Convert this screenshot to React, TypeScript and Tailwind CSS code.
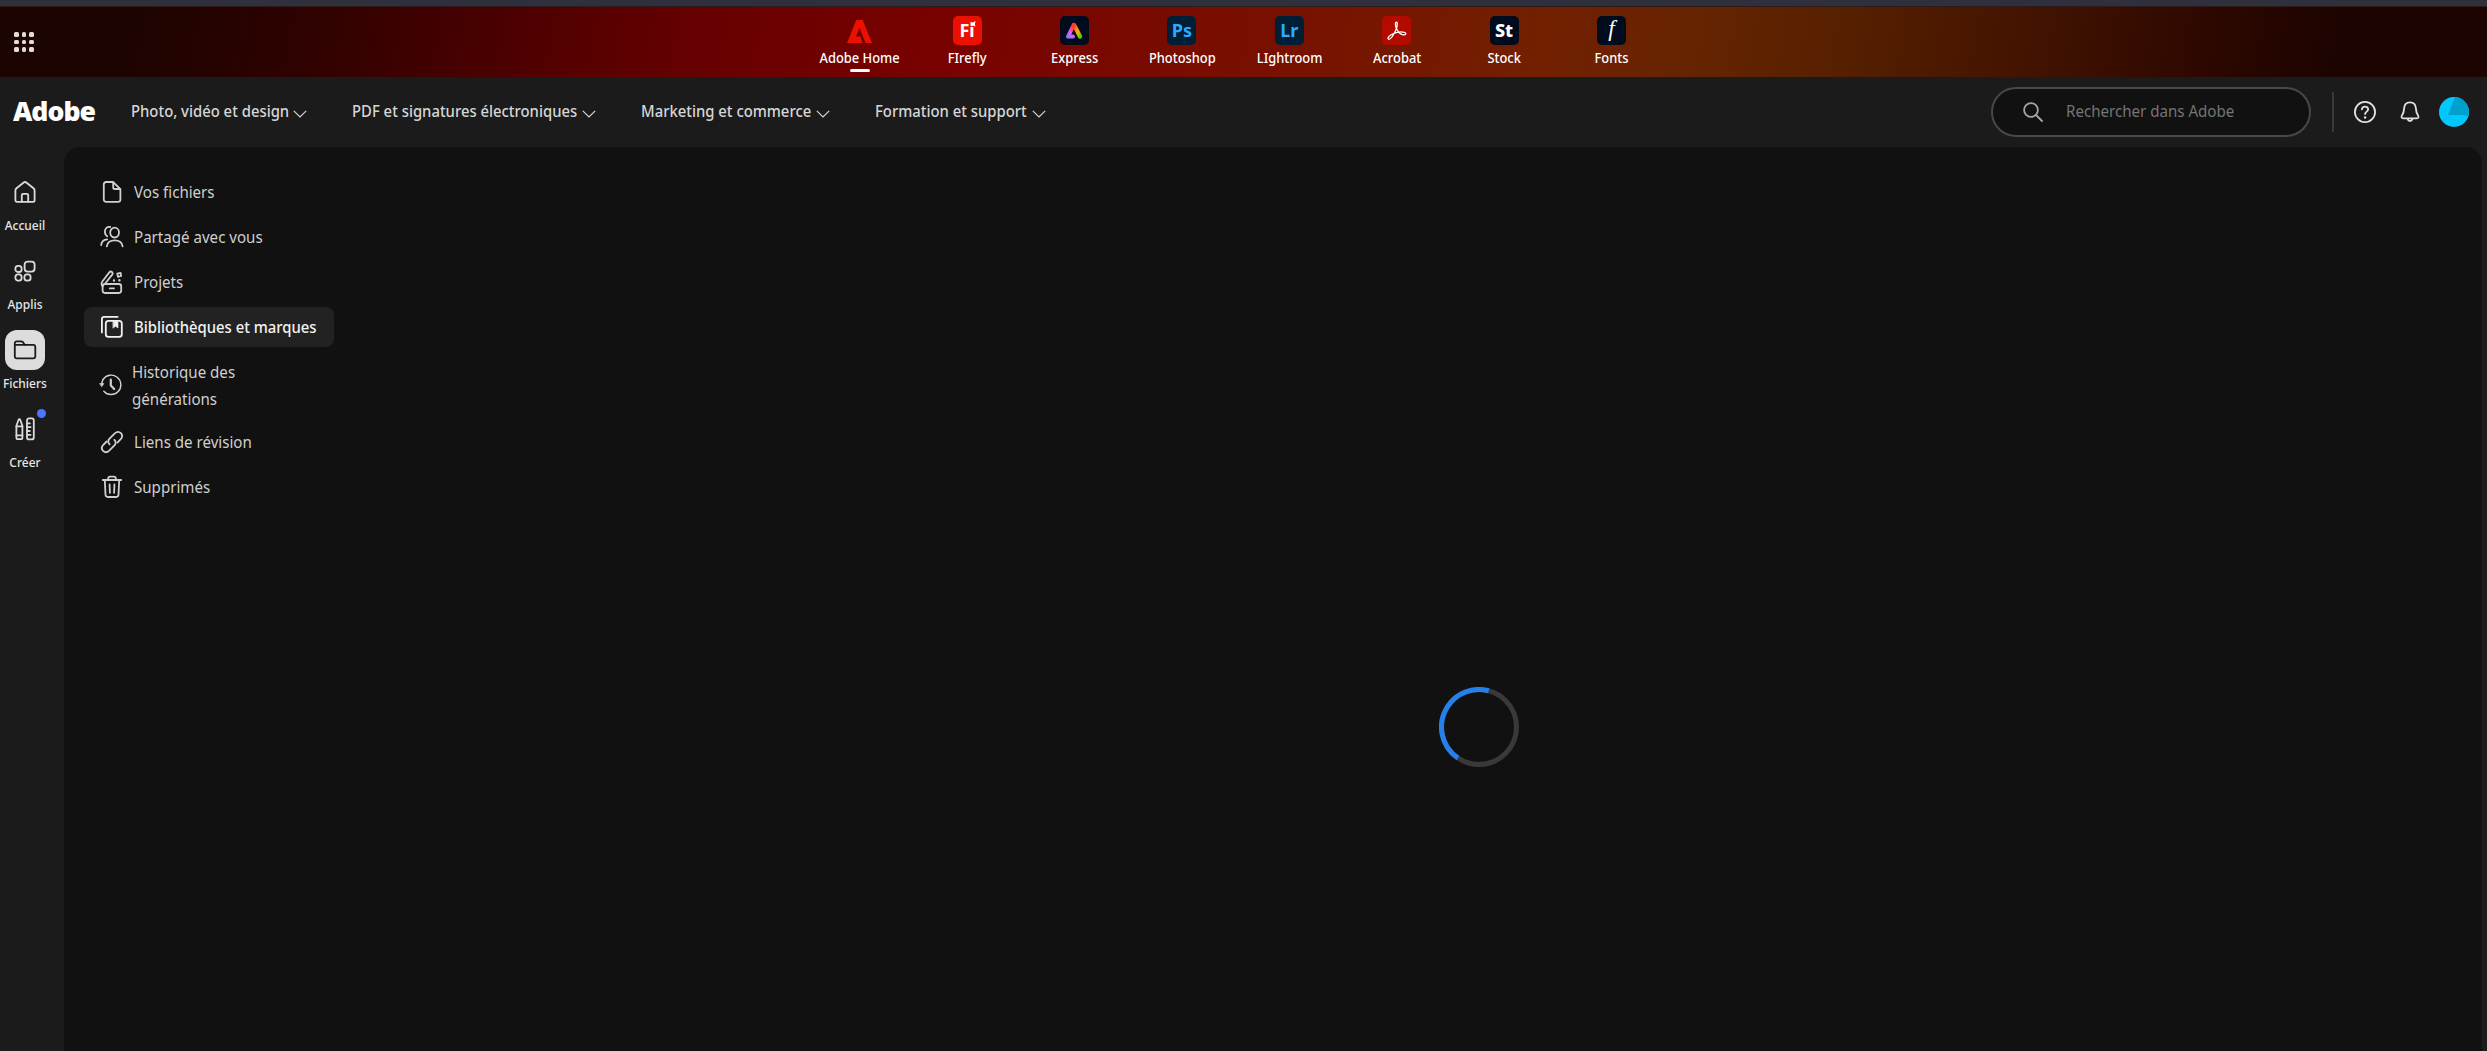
import React from 'react';

interface AppLink {
  name: string;
  icon: React.ReactNode;
  active?: boolean;
}

interface MenuItem {
  label: string;
  icon: React.ReactNode;
  active?: boolean;
}

interface TileProps {
  className: string;
  children: React.ReactNode;
}

const Tile = ({ className, children }: TileProps) => (
  <span className={`flex h-[29px] w-[29px] items-center justify-center rounded-[5px] ${className}`}>{children}</span>
);

const AcrobatMark = () => (
  <svg viewBox="0 0 20 20" className="h-5 w-5" fill="none" stroke="#fff" strokeWidth="1.3" strokeLinejoin="round">
    <path d="M9.3 1.2C7.9 1.4 8.2 4.6 9.4 7.4C10.8 10.4 14 13.6 16.6 13.9C19.2 14.1 19.6 11.9 17.2 11.3C13.6 10.5 7.6 11.8 4 13.8C1 15.5 0.4 17.6 1.6 18.2C3.8 19 8 11.8 9.5 7.2C10.5 4 10.7 1.1 9.3 1.2Z" />
  </svg>
);

const ExpressMark = () => (
  <svg viewBox="0 0 18 18" className="h-[18px] w-[18px]" fill="none" strokeLinecap="round" strokeLinejoin="round">
    <defs>
      <linearGradient id="exLeft" x1="0" y1="1" x2="0.6" y2="0">
        <stop offset="0" stopColor="#8a7bff" />
        <stop offset="0.5" stopColor="#e05cf0" />
        <stop offset="1" stopColor="#ff3b30" />
      </linearGradient>
      <linearGradient id="exRight" x1="0" y1="0" x2="1" y2="1">
        <stop offset="0" stopColor="#ff3b20" />
        <stop offset="0.6" stopColor="#ffb000" />
        <stop offset="1" stopColor="#5ad000" />
      </linearGradient>
    </defs>
    <path d="M9 3L15 14.5" stroke="url(#exRight)" strokeWidth="4.4" />
    <path d="M8.6 3.2L3 14.6H8" stroke="url(#exLeft)" strokeWidth="4" />
    <path d="M8.8 9L10.8 13.6" stroke="#000b1d" strokeWidth="1.6" />
  </svg>
);

const apps: AppLink[] = [
  {
    name: 'Adobe Home',
    active: true,
    icon: (
      <svg viewBox="0 0 25 23" className="mt-0.5 h-[23px] w-[25px]" fill="#eb1000">
        <path d="M9.3 0H15.7L25 23H18.6L12.6 7.8L9 16.6H13.4L15.4 23H0Z" />
      </svg>
    ),
  },
  {
    name: 'FIrefly',
    icon: (
      <Tile className="relative bg-[#eb1000] text-[18px] font-bold text-white">
        Fi
        <svg viewBox="0 0 6 6" className="absolute left-[17px] top-[5px] h-[6px] w-[6px]" fill="#fff">
          <path d="M0 1L3 1.4L5.6 0L4.8 3L5.4 5.6L3 4.6L0.6 5.4L1.4 3Z" />
        </svg>
      </Tile>
    ),
  },
  { name: 'Express', icon: <Tile className="bg-[#000b1d]"><ExpressMark /></Tile> },
  { name: 'Photoshop', icon: <Tile className="bg-[#001e36] text-[18px] font-bold text-[#31a8ff]">Ps</Tile> },
  { name: 'LIghtroom', icon: <Tile className="bg-[#001e36] text-[18px] font-bold text-[#31a8ff]">Lr</Tile> },
  { name: 'Acrobat', icon: <Tile className="bg-[#b30b00]"><AcrobatMark /></Tile> },
  { name: 'Stock', icon: <Tile className="bg-[#000b1d] text-[18px] font-extrabold text-white">St</Tile> },
  {
    name: 'Fonts',
    icon: <Tile className="bg-[#000b1d] pb-0.5 font-['Liberation_Serif',serif] text-[23px] italic text-white">f</Tile>,
  },
];

const navLinks = [
  { label: 'Photo, vidéo et design', box: 'w-[221px]', text: 'w-[162px]' },
  { label: 'PDF et signatures électroniques', box: 'w-[289px]', text: 'w-[230px]' },
  { label: 'Marketing et commerce', box: 'w-[234px]', text: 'w-[175px]' },
  { label: 'Formation et support', box: 'w-[172px]', text: 'w-[157px]' },
];

interface GlyphProps {
  className?: string;
  children: React.ReactNode;
}

// 24px outline icon, one unit per pixel
const Glyph = ({ className = '', children }: GlyphProps) => (
  <svg viewBox="0 0 24 24" className={`h-6 w-6 shrink-0 ${className}`} fill="none" stroke="currentColor" strokeWidth="1.8" strokeLinecap="round" strokeLinejoin="round">
    {children}
  </svg>
);

const railItems: MenuItem[] = [
  {
    label: 'Accueil',
    icon: (
      <Glyph>
        <path d="M2.4 10.4C2.4 9.4 2.8 8.8 3.5 8.2L10.7 2.5C11.5 1.9 12.5 1.9 13.3 2.5L20.5 8.2C21.2 8.8 21.6 9.4 21.6 10.4V20.2C21.6 21.2 21 21.8 20 21.8H4C3 21.8 2.4 21.2 2.4 20.2Z" />
        <path d="M8.8 21.6V15.2C8.8 14.3 9.3 13.8 10.2 13.8H13.8C14.7 13.8 15.2 14.3 15.2 15.2V21.6" />
      </Glyph>
    ),
  },
  {
    label: 'Applis',
    icon: (
      <Glyph>
        <rect x="11.6" y="2.6" width="10" height="10" rx="3" />
        <rect x="2.4" y="6.8" width="6.2" height="6.2" rx="2.6" />
        <rect x="2.4" y="15.4" width="6.2" height="6.2" rx="2.6" />
        <rect x="11.4" y="15.4" width="6.2" height="6.2" rx="2.6" />
      </Glyph>
    ),
  },
  {
    label: 'Fichiers',
    active: true,
    icon: (
      <Glyph className="text-[#1b1b1b]">
        <path d="M1.8 18.2V5.4C1.8 4.1 2.6 3.3 3.9 3.3H8C8.8 3.3 9.4 3.6 9.9 4.2L11.8 6.8H20.2C21.5 6.8 22.3 7.6 22.3 8.9V18.2C22.3 19.5 21.5 20.3 20.2 20.3H3.9C2.6 20.3 1.8 19.5 1.8 18.2Z" />
        <path d="M2 6.8H11.8" />
      </Glyph>
    ),
  },
  {
    label: 'Créer',
    icon: (
      <Glyph>
        <path d="M3.4 8.8L5.6 2.8C5.9 2 6.9 2 7.2 2.8L9.4 8.8V20.4C9.4 21.6 8.8 22.2 7.8 22.2H5C4 22.2 3.4 21.6 3.4 20.4Z" />
        <path d="M3.4 9.4H9.4M3.4 18.4H9.4" />
        <rect x="14" y="1.4" width="6.8" height="21" rx="2" />
        <path d="M14.2 6.4H16.8M14.2 10.2H17.6M14.2 14H16.8M14.2 17.8H17.6" />
      </Glyph>
    ),
  },
];

const menuItems: MenuItem[] = [
  {
    label: 'Vos fichiers',
    icon: (
      <Glyph>
        <path d="M3.8 19.4V4.4C3.8 3 4.7 2 6.2 2H13L20.4 9.2V19.4C20.4 20.9 19.5 21.8 18 21.8H6.2C4.7 21.8 3.8 20.9 3.8 19.4Z" />
        <path d="M13.2 2.4V7.4C13.2 8.5 13.8 9 14.8 9H20" />
      </Glyph>
    ),
  },
  {
    label: 'Partagé avec vous',
    icon: (
      <Glyph>
        <ellipse cx="14.6" cy="7.6" rx="4.4" ry="4.9" />
        <path d="M6.8 21.4C7.3 17.6 10.4 15.4 14.7 15.4C19 15.4 22.1 17.6 22.6 21.4" />
        <path d="M10.2 2C7.2 1.4 4.9 3.4 4.9 6.6C4.9 8.8 5.8 10.4 7.2 11.2M1.2 20C1.4 16.6 3.6 14.6 7.2 14.3" />
      </Glyph>
    ),
  },
  {
    label: 'Projets',
    icon: (
      <Glyph>
        <rect x="2.6" y="14" width="18.6" height="9" rx="2.4" />
        <path d="M9.8 18.4H14" />
        <path d="M2.7 16.4C1.2 14.6 1.2 12.9 2.5 11.2L9.3 2.4C10 1.5 11.1 1.4 11.9 2C12.8 2.7 12.9 3.7 12.2 4.6L5 13.8" />
        <path d="M17.2 3.6L20.6 2.8L21.2 6L18 6.8Z" />
        <path d="M14 10.5V10.6M19.4 10.3V10.4" strokeWidth="2.4" />
      </Glyph>
    ),
  },
  {
    label: 'Bibliothèques et marques',
    active: true,
    icon: (
      <Glyph>
        <path d="M1.9 17.4V4.2C1.9 2.8 2.8 1.9 4.2 1.9H17.6" />
        <rect x="5.8" y="5.8" width="16" height="16" rx="2.6" />
        <path d="M13.2 6.2H18V13L15.6 11.2L13.2 13Z" fill="currentColor" strokeWidth="0.6" />
      </Glyph>
    ),
  },
  {
    label: 'Historique des générations',
    icon: (
      <Glyph>
        <path d="M4 6.6A9.7 9.7 0 1 1 4.8 18.2" strokeWidth="1.4" />
        <path d="M11.8 6.6V12.4L15.2 16" strokeWidth="2.2" />
        <path d="M1 10.6H4.8L2.9 13.4Z" fill="currentColor" strokeWidth="0.8" />
        <path d="M2.8 11C2.9 9.4 3.3 8 4 6.6" strokeWidth="1.4" />
      </Glyph>
    ),
  },
  {
    label: 'Liens de révision',
    icon: (
      <Glyph>
        <path d="M9.6 14.4C7.9 12.6 8 10.2 9.8 8.4L14.8 3.4C16.7 1.6 19.2 1.6 20.9 3.2C22.6 4.9 22.5 7.4 20.7 9.2L17.4 12.6" />
        <path d="M14.4 9.8C16.1 11.5 16 13.9 14.2 15.7L9.2 20.7C7.3 22.5 4.8 22.5 3.1 20.9C1.4 19.2 1.5 16.7 3.3 14.9L6.6 11.5" />
      </Glyph>
    ),
  },
  {
    label: 'Supprimés',
    icon: (
      <Glyph>
        <path d="M2.8 5H21.2M8.2 4.8V3.6C8.2 2.4 8.9 1.7 10.1 1.7H13.9C15.1 1.7 15.8 2.4 15.8 3.6V4.8" />
        <path d="M4.8 5.2L5.5 19.8C5.6 21.2 6.4 22 7.8 22H16.2C17.6 22 18.4 21.2 18.5 19.8L19.2 5.2" />
        <path d="M9.6 9.4L9.9 17.8M14.4 9.4L14.1 17.8" />
      </Glyph>
    ),
  },
];

const dots = [0, 1, 2, 3, 4, 5, 6, 7, 8];

const AppBar = () => (
  <header className="flex h-[70px] bg-[linear-gradient(100deg,#1c0400_0%,#1c0400_5%,#300200_13%,#4e0000_21%,#660000_28%,#780200_38%,#781000_51%,#722000_62%,#662400_68%,#562000_74%,#441400_81%,#2c0700_89%,#1c0400_94%)]">
    <div className="w-[806px] shrink-0 pl-[14px] pt-[25px]">
      <div className="grid w-5 grid-cols-3 gap-[3px]">
        {dots.map((dot) => (
          <span key={dot} className="h-[4.6px] w-[4.6px] rounded-[1.5px] bg-[#e6dad8]" />
        ))}
      </div>
    </div>
    {apps.map((app) => (
      <a key={app.name} className="flex w-[107.4px] flex-col items-center pt-[9px]">
        <span className="flex h-[29px] items-center">{app.icon}</span>
        <span className="mt-[3px] scale-x-[0.92] whitespace-nowrap text-[14px] font-medium leading-5 text-white">{app.name}</span>
        {app.active && <span className="mt-px h-[3px] w-5 rounded-full bg-white" />}
      </a>
    ))}
  </header>
);

const NavBar = () => (
  <nav className="flex h-[70px] items-center text-[#d6d6d6]">
    <a className="w-[131px] shrink-0 pb-0.5 pl-[13px] text-white">
      <span className="inline-block origin-left scale-x-[0.985] font-['Open_Sans',sans-serif] text-[27px] font-extrabold leading-8 tracking-[-1px]">Adobe</span>
    </a>
    {navLinks.map((link) => (
      <button key={link.label} className={`flex shrink-0 items-center pb-0.5 ${link.box}`}>
        <span className={`text-left ${link.text}`}>
          <span className="inline-block origin-left scale-x-[0.9] whitespace-nowrap text-[16.5px] font-medium leading-6">{link.label}</span>
        </span>
        <svg viewBox="0 0 14 8" className="mt-1.5 h-2 w-3.5" fill="none" stroke="currentColor" strokeWidth="1.2">
          <path d="M0.8 0.8L7 7L13.2 0.8" />
        </svg>
      </button>
    ))}
    <div className="ml-auto flex items-center pb-px">
      <div className="flex h-[50px] w-80 items-center rounded-full border-2 border-[#484848] bg-[#111] pl-[30px]">
        <svg viewBox="0 0 20 20" className="h-5 w-5" fill="none" stroke="#a5a5a5" strokeWidth="1.8" strokeLinecap="round">
          <circle cx="8" cy="8" r="6.9" />
          <path d="M13 13L19 19" />
        </svg>
        <span className="ml-[23px] inline-block origin-left scale-x-[0.915] whitespace-nowrap text-[16.5px] text-[#757575]">Rechercher dans Adobe</span>
      </div>
      <span className="ml-[21px] h-10 w-0.5 bg-[#393939]" />
      <svg viewBox="0 0 24 24" className="ml-[19px] h-6 w-6 text-[#e1e1e1]" fill="none" stroke="currentColor" strokeWidth="1.8" strokeLinecap="round">
        <circle cx="12" cy="12" r="10.1" />
        <path d="M8.9 9.4C9.1 7.6 10.3 6.7 12 6.7C13.8 6.7 15.1 7.7 15.1 9.4C15.1 11.6 12.2 11.6 12.1 14" />
        <path d="M12.1 17.4V17.5" strokeWidth="2.4" />
      </svg>
      <svg viewBox="0 0 24 24" className="ml-[21px] h-6 w-6 text-[#e1e1e1]" fill="none" stroke="currentColor" strokeWidth="1.8" strokeLinecap="round" strokeLinejoin="round">
        <path d="M12 2.4C8.3 2.4 6.3 5 6.1 8.4C5.9 12.2 5.3 13.6 3.9 15.6C3.1 16.9 3.5 18.4 5.2 18.4H18.8C20.5 18.4 20.9 16.9 20.1 15.6C18.7 13.6 18.1 12.2 17.9 8.4C17.7 5 15.7 2.4 12 2.4Z" />
        <path d="M9.7 18.8C10 20.4 10.8 20.9 12 20.9C13.2 20.9 14 20.4 14.3 18.8" />
      </svg>
      <svg viewBox="0 0 30 30" className="ml-[17px] mr-[18px] h-[30px] w-[30px]">
        <clipPath id="avatarClip"><circle cx="15" cy="15" r="15" /></clipPath>
        <g clipPath="url(#avatarClip)">
          <rect width="30" height="30" fill="#00c8ff" />
          <path d="M16 0H30V20L26 18H9Z" fill="#00a0cc" />
        </g>
      </svg>
    </div>
  </nav>
);

const Rail = () => (
  <aside className="flex w-16 shrink-0 flex-col gap-[11px] pt-[25px]">
    {railItems.map((item) => (
      <a key={item.label} className="relative flex h-[68px] w-[49px] flex-col items-center">
        <span className={`flex h-10 w-10 items-center justify-center rounded-xl ${item.active ? 'bg-[#dcdcdc]' : 'text-[#dbdbdb]'}`}>{item.icon}</span>
        <span className="mt-[3px] inline-block scale-x-[0.92] whitespace-nowrap text-[13px] font-medium leading-5 text-[#e6e6e6]">{item.label}</span>
        {item.label === 'Créer' && <span className="absolute left-[37px] top-0 h-[9px] w-[9px] rounded-full bg-[#4b75ff]" />}
      </a>
    ))}
  </aside>
);

const SideMenu = () => (
  <ul className="ml-5 mt-[25px] flex w-[250px] shrink-0 flex-col gap-[5px] text-[#cfcfcf]">
    {menuItems.map((item) => {
      const long = item.label.startsWith('Historique');
      return (
        <li
          key={item.label}
          className={`flex items-center ${long ? 'h-[65px] gap-[9px] pl-[15px]' : 'h-10 gap-[10px] pl-4'} ${item.active ? 'rounded-lg bg-[#222] text-[#f2f2f2]' : ''}`}
        >
          {item.icon}
          <span
            className={`inline-block origin-left text-[16.5px] ${item.active ? 'scale-x-[0.9] font-medium' : 'scale-x-[0.915]'} ${long ? 'w-36 leading-[27px]' : 'whitespace-nowrap'}`}
          >
            {item.label}
          </span>
        </li>
      );
    })}
  </ul>
);

const Spinner = () => (
  <svg viewBox="0 0 80 80" className="h-20 w-20" fill="none" strokeWidth="5">
    <circle cx="40" cy="40" r="37.5" stroke="#393939" />
    <circle cx="40" cy="40" r="37.5" stroke="#2680eb" pathLength="360" strokeDasharray="161 199" transform="rotate(124 40 40)" />
  </svg>
);

export default function App() {
  return (
    <div className="flex h-[1051px] w-full flex-col overflow-hidden border-t-[6px] border-[#30303c] bg-[#1b1b1b] font-['Noto_Sans',sans-serif]">
      <div className="h-px shrink-0 bg-[#2a1c1e]" />
      <AppBar />
      <NavBar />
      <div className="flex min-h-0 flex-1 pr-[5px]">
        <Rail />
        <main className="flex flex-1 rounded-t-2xl bg-[#111]">
          <SideMenu />
          <section className="flex flex-1 justify-center pl-[141px] pt-[540px]">
            <Spinner />
          </section>
        </main>
      </div>
    </div>
  );
}
